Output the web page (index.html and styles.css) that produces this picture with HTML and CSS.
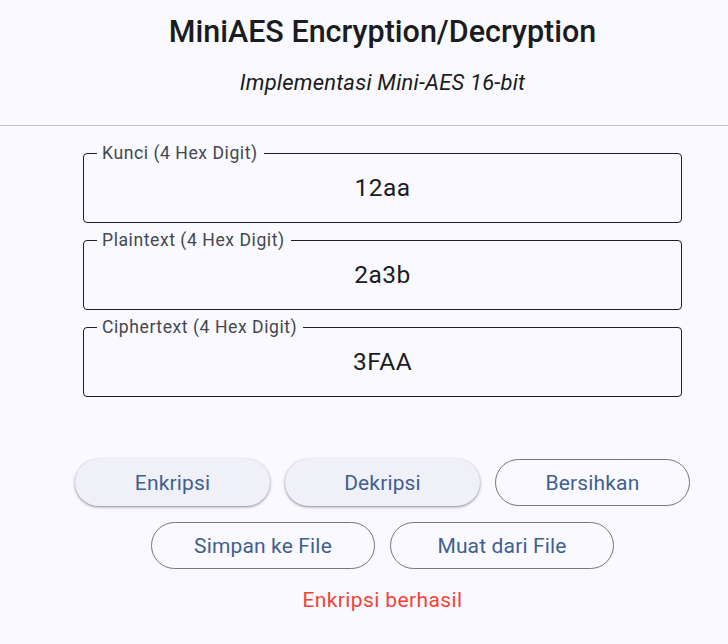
FILE: index.html
```html
<!DOCTYPE html>
<html lang="id">
<head>
<meta charset="utf-8">
<title>MiniAES</title>
<link rel="stylesheet" href="styles.css">
</head>
<body>
<header class="header">
  <h1 class="title">MiniAES Encryption/Decryption</h1>
  <p class="subtitle">Implementasi Mini-AES 16-bit</p>
</header>
<main class="content">
  <div class="fields">
    <fieldset class="field">
      <legend class="field-label">Kunci (4 Hex Digit)</legend>
      <div class="field-value">12aa</div>
    </fieldset>
    <fieldset class="field">
      <legend class="field-label">Plaintext (4 Hex Digit)</legend>
      <div class="field-value">2a3b</div>
    </fieldset>
    <fieldset class="field">
      <legend class="field-label">Ciphertext (4 Hex Digit)</legend>
      <div class="field-value">3FAA</div>
    </fieldset>
  </div>
  <div class="actions">
    <div class="row">
      <button class="btn btn-elevated btn-main">Enkripsi</button>
      <button class="btn btn-elevated btn-main">Dekripsi</button>
      <button class="btn btn-outlined btn-main">Bersihkan</button>
    </div>
    <div class="row">
      <button class="btn btn-outlined btn-file">Simpan ke File</button>
      <button class="btn btn-outlined btn-file">Muat dari File</button>
    </div>
  </div>
  <p class="status">Enkripsi berhasil</p>
</main>
</body>
</html>
```
FILE: styles.css
```css
* { box-sizing: border-box; }
html, body {
  margin: 0;
  background: #f9f9ff;
  font-family: Roboto, "Noto Sans", sans-serif;
  color: #1a1c20;
}
.header {
  padding-left: 37px;
  height: 126px;
  border-bottom: 1px solid #c5c6cd;
  display: flex;
  flex-direction: column;
  align-items: center;
}
.title {
  margin: 14px 0 0;
  font-size: 30.5px;
  line-height: 36px;
  font-weight: 500;
}
.subtitle {
  margin: 18px 0 0;
  font-size: 22px;
  line-height: 30px;
  letter-spacing: 0.2px;
  font-style: italic;
  color: #1a1c20;
}
.content {
  padding-left: 37px;
  display: flex;
  flex-direction: column;
  align-items: center;
}
.fields {
  margin-top: 17px;
  width: 599px;
  display: flex;
  flex-direction: column;
  gap: 7px;
}
.field {
  margin: 0;
  padding: 0 16px;
  border: 1.3px solid #1f2023;
  border-radius: 4px;
  min-width: 0;
}
.field-label {
  margin-left: -3px;
  padding: 0 6px 0 5px;
  font-size: 17.6px;
  line-height: 20px;
  letter-spacing: 0.55px;
  color: #44474e;
}
.field-value {
  padding: 9px 0 18px;
  text-align: center;
  font-size: 24.5px;
  line-height: 32px;
  letter-spacing: 0.5px;
  color: #1a1c20;
}
.actions {
  margin-top: 62px;
  display: flex;
  flex-direction: column;
  align-items: center;
  gap: 16px;
}
.row {
  display: flex;
  gap: 15px;
}
.btn {
  height: 47px;
  border-radius: 24px;
  font-family: Roboto, "Noto Sans", sans-serif;
  font-size: 21px;
  letter-spacing: 0.15px;
  color: #415f91;
  background: transparent;
  padding: 0;
  cursor: pointer;
}
.btn-main { width: 195px; }
.btn-file { width: 224px; }
.btn-elevated {
  border: none;
  background: #f0f1f8;
  box-shadow: 0 1px 2px rgba(0, 0, 0, 0.3), 0 1px 3px 1px rgba(0, 0, 0, 0.12);
}
.btn-outlined {
  border: 1.3px solid #74777f;
}
.status {
  margin: 17px 0 0;
  font-size: 21px;
  line-height: 28px;
  letter-spacing: 0.4px;
  color: #f44336;
}
```
